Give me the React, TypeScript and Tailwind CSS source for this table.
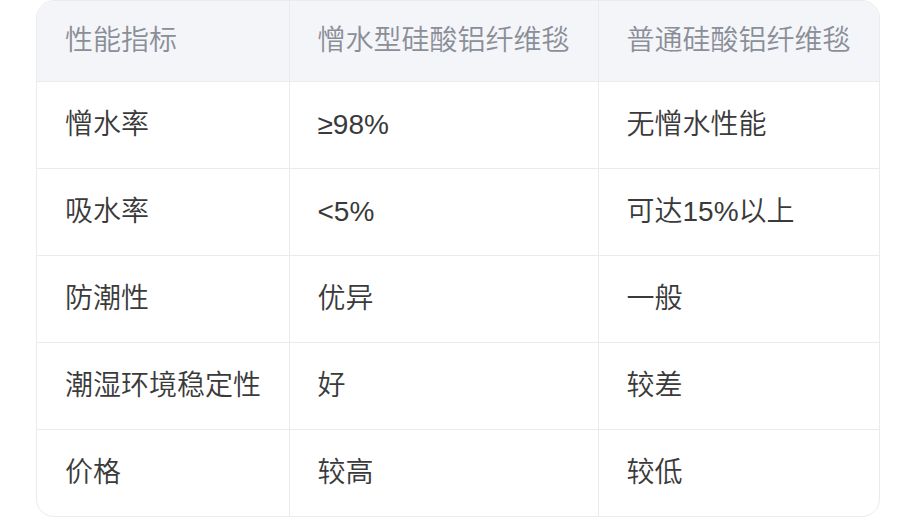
const rows = [
  ["憎水率", "≥98%", "无憎水性能"],
  ["吸水率", "<5%", "可达15%以上"],
  ["防潮性", "优异", "一般"],
  ["潮湿环境稳定性", "好", "较差"],
  ["价格", "较高", "较低"],
];

const App = () => {
  return (
    <div
      className="min-h-[530px] w-[914px] bg-white"
      style={{ fontFamily: '"Liberation Sans", "Noto Sans CJK SC", sans-serif' }}
    >
      <div className="ml-[36px] w-[844px] overflow-hidden rounded-[18px] border border-[#ebebeb]">
        <table className="w-full table-fixed border-collapse text-[28px] font-[350]">
          <colgroup>
            <col className="w-[252px]" />
            <col className="w-[309px]" />
            <col />
          </colgroup>
          <thead>
            <tr className="h-[80px] bg-[#f4f5f9] text-[#8a8e97]">
              <th className="border-r border-[#ebebeb] pl-[28px] text-left font-[350]">性能指标</th>
              <th className="border-r border-[#ebebeb] pl-[28px] text-left font-[350]">憎水型硅酸铝纤维毯</th>
              <th className="pl-[28px] text-left font-[350]">普通硅酸铝纤维毯</th>
            </tr>
          </thead>
          <tbody className="text-[#3a3a3a]">
            {rows.map((r) => (
              <tr key={r[0]} className="h-[87px] border-t border-[#ebebeb]">
                <td className="border-r border-[#ebebeb] pl-[28px]">{r[0]}</td>
                <td className="border-r border-[#ebebeb] pl-[28px]">{r[1]}</td>
                <td className="pl-[28px]">{r[2]}</td>
              </tr>
            ))}
          </tbody>
        </table>
      </div>
    </div>
  );
};

export default App;
